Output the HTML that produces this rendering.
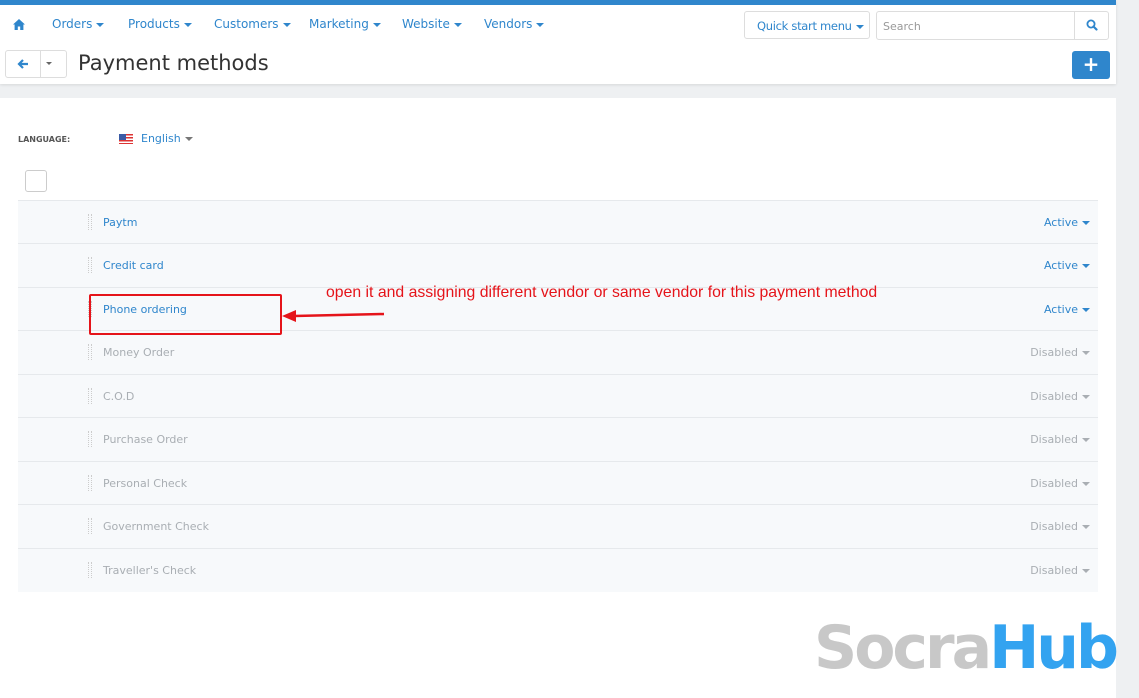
<!DOCTYPE html>
<html><head><meta charset="utf-8"><style>
*{box-sizing:border-box;margin:0;padding:0}
body{width:1139px;height:683px;overflow:hidden;background:#eef0f2;font-family:"DejaVu Sans","Liberation Sans",sans-serif;position:relative}
.top{position:absolute;left:0;top:0;width:1116px;height:84px;background:#fff;border-top:5px solid #2f86cc;box-shadow:0 1px 3px rgba(0,0,0,.1)}
.nav{position:absolute;top:17px;font-size:12px;color:#2f86cc;white-space:nowrap}
.car{display:inline-block;width:0;height:0;border-left:4px solid transparent;border-right:4px solid transparent;border-top:4px solid #2f86cc;vertical-align:middle;margin-left:4px}
.panel{position:absolute;left:0;top:98px;width:1116px;height:600px;background:#fff}
.row{position:absolute;left:18px;width:1080px;height:44px;background:#f7f9fb;border-top:1px solid #e6e9ec;font-size:11px}
.row .n{position:absolute;left:85px;top:15px}
.row .h{position:absolute;left:70px;top:13px;width:4px;height:16px;border-left:1px dotted #ccc;border-right:1px dotted #ccc}
.row .s{position:absolute;right:8px;top:15px}
.on{color:#2f86cc}.off{color:#a9aeb3}
.off .car{border-top-color:#a9aeb3}
</style></head><body>
<div class="top"></div>
<svg style="position:absolute;left:13px;top:19px" width="12" height="11" viewBox="0 0 12 11"><path d="M6 0L0 5.5h1.6V11h3.2V7.5h2.4V11h3.2V5.5H12z" fill="#2f86cc"/></svg>
<div class="nav" style="left:52px">Orders<span class="car"></span></div>
<div class="nav" style="left:128px">Products<span class="car"></span></div>
<div class="nav" style="left:214px">Customers<span class="car"></span></div>
<div class="nav" style="left:309px">Marketing<span class="car"></span></div>
<div class="nav" style="left:402px">Website<span class="car"></span></div>
<div class="nav" style="left:484px">Vendors<span class="car"></span></div>
<div style="position:absolute;left:744px;top:11px;width:126px;height:28px;border:1px solid #ddd;border-radius:3px;font-size:11.5px;color:#2f86cc;padding:7px 0 0 12px;white-space:nowrap;letter-spacing:-0.3px">Quick start menu<span class="car"></span></div>
<div style="position:absolute;left:876px;top:11px;width:233px;height:29px;border:1px solid #ddd;border-radius:3px;font-size:11px;color:#999;padding:8px 0 0 6px">Search</div>
<div style="position:absolute;left:1074px;top:11px;width:1px;height:29px;background:#ddd"></div>
<svg style="position:absolute;left:1086px;top:19px" width="12" height="12" viewBox="0 0 12 12"><circle cx="5" cy="5" r="3.6" fill="none" stroke="#2f86cc" stroke-width="1.8"/><path d="M7.5 7.5L10.5 10.5" stroke="#2f86cc" stroke-width="2.2" stroke-linecap="round"/></svg>
<div style="position:absolute;left:5px;top:50px;width:62px;height:28px;border:1px solid #ddd;border-radius:3px"></div>
<div style="position:absolute;left:40px;top:51px;width:1px;height:26px;background:#ddd"></div>
<svg style="position:absolute;left:17px;top:58px" width="12" height="12" viewBox="0 0 12 12"><path d="M11 6H2M6 2L2 6l4 4" stroke="#2f86cc" stroke-width="2.2" fill="none"/></svg>
<span class="car" style="position:absolute;left:46px;top:62px;margin:0;border-top-color:#666;border-width:3px 3px 0 3px"></span>
<div style="position:absolute;left:78px;top:51px;font-size:21px;color:#333">Payment methods</div>
<div style="position:absolute;left:1072px;top:51px;width:38px;height:28px;background:#2f86cc;border-radius:3px;color:#fff;font-size:20px;font-weight:bold;text-align:center;line-height:27px">+</div>
<div class="panel"></div>
<div style="position:absolute;left:18px;top:135px;font-size:8px;font-weight:bold;color:#555">LANGUAGE:</div>
<div style="position:absolute;left:119px;top:134px;width:14px;height:10px;background:repeating-linear-gradient(#d33 0 1.5px,#fff 1.5px 3px)"><div style="width:7px;height:6px;background:#3b5ba5"></div></div>
<div style="position:absolute;left:141px;top:132px;font-size:11px;color:#2f86cc">English<span class="car" style="border-top-color:#777"></span></div>
<div style="position:absolute;left:25px;top:170px;width:22px;height:22px;border:1px solid #ccc;border-radius:3px;background:#fff"></div>
<div class="row on" style="top:200px"><div class="h"></div><div class="n">Paytm</div><div class="s">Active<span class="car"></span></div></div>
<div class="row on" style="top:243px"><div class="h"></div><div class="n">Credit card</div><div class="s">Active<span class="car"></span></div></div>
<div class="row on" style="top:287px"><div class="h"></div><div class="n">Phone ordering</div><div class="s">Active<span class="car"></span></div></div>
<div class="row off" style="top:330px"><div class="h"></div><div class="n">Money Order</div><div class="s">Disabled<span class="car"></span></div></div>
<div class="row off" style="top:374px"><div class="h"></div><div class="n">C.O.D</div><div class="s">Disabled<span class="car"></span></div></div>
<div class="row off" style="top:417px"><div class="h"></div><div class="n">Purchase Order</div><div class="s">Disabled<span class="car"></span></div></div>
<div class="row off" style="top:461px"><div class="h"></div><div class="n">Personal Check</div><div class="s">Disabled<span class="car"></span></div></div>
<div class="row off" style="top:504px"><div class="h"></div><div class="n">Government Check</div><div class="s">Disabled<span class="car"></span></div></div>
<div class="row off" style="top:548px"><div class="h"></div><div class="n">Traveller's Check</div><div class="s">Disabled<span class="car"></span></div></div>
<div style="position:absolute;left:89px;top:294px;width:193px;height:41px;border:2px solid #e5141a;border-radius:2px"></div>
<svg style="position:absolute;left:280px;top:306px" width="106" height="18" viewBox="0 0 106 18"><path d="M104 8L14 10" stroke="#e5141a" stroke-width="2.5"/><path d="M2 10L16 4V16z" fill="#e5141a"/></svg>
<div style="position:absolute;left:326px;top:284px;font-family:'Liberation Sans',sans-serif;font-size:15.8px;color:#e5141a;white-space:nowrap">open it and assigning different vendor or same vendor for this payment method</div>
<div style="position:absolute;left:814px;top:608px;font-family:'DejaVu Sans',sans-serif;font-weight:bold;font-size:60px;letter-spacing:-3px;line-height:80px;white-space:nowrap"><span style="color:#c8c8c8">Socra</span><span style="color:#33a3f0">Hub</span></div>
</body></html>
